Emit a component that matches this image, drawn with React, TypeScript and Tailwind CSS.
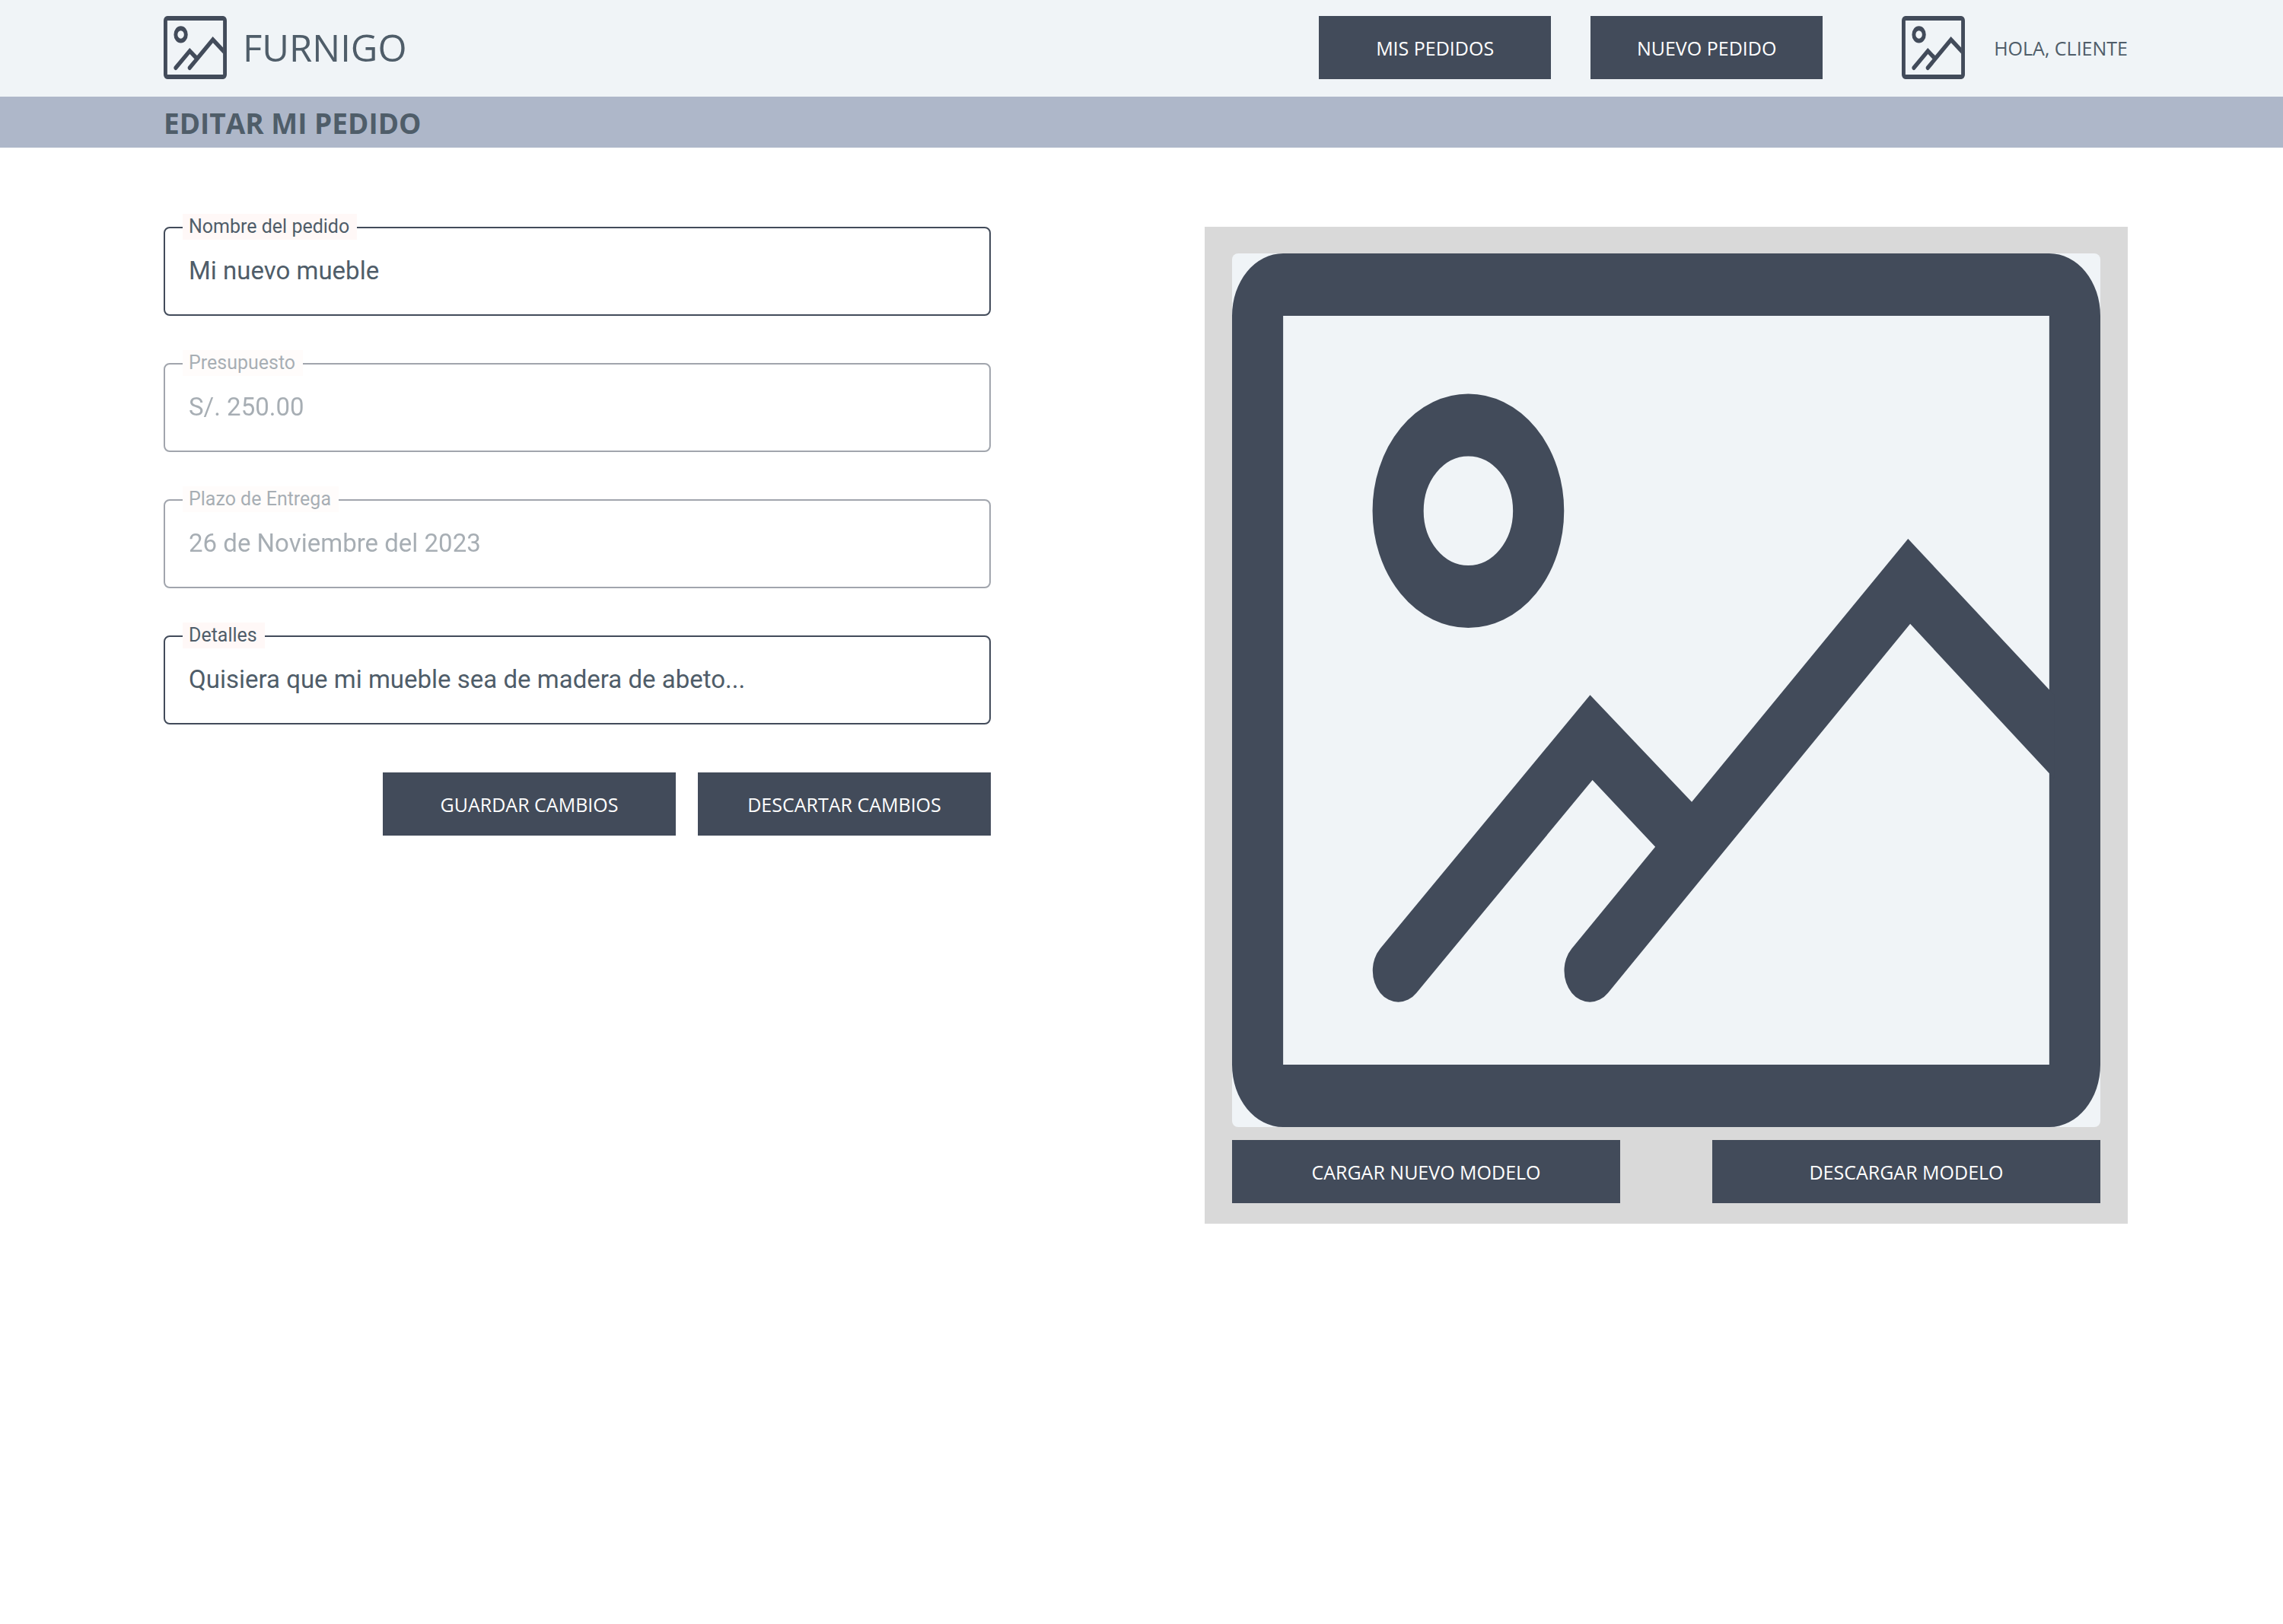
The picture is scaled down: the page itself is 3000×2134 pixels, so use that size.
import type { ReactNode } from 'react';

function PictureIcon({ className, title }: { className: string; title: string }) {
  return (
    <svg viewBox="0 0 17 14" preserveAspectRatio="none" className={className} role="img" aria-label={title} fill="currentColor">
      <path fillRule="evenodd" d="M1 0H16A1 1 0 0 1 17 1V13A1 1 0 0 1 16 14H1A1 1 0 0 1 0 13V1A1 1 0 0 1 1 0ZM1 1V13H16V1Z" />
      <circle cx="4.625" cy="4.125" r="1.375" fill="none" stroke="currentColor" strokeWidth="1" />
      <path d="M7.01 7.076L9 8.79L13.235 4.573L16.1 7.08V8.42L13.277 5.937L7.36 11.85A.5 .5 0 0 1 6.65 11.14L8.286 9.51L7.056 8.44L3.61 11.85A.5 .5 0 0 1 2.9 11.14Z" />
    </svg>
  );
}

function Button({ children, className }: { children: ReactNode; className: string }) {
  return (
    <button type="button" className={`h-[83px] bg-[#424b5a] text-center text-[25px] leading-8 whitespace-nowrap text-white ${className}`}>
      {children}
    </button>
  );
}

function Field({ id, label, value, disabled = false }: { id: string; label: string; value: string; disabled?: boolean }) {
  return (
    <div className={`relative font-[Roboto,sans-serif] text-[#4f5d69] ${disabled ? 'opacity-50' : ''}`}>
      <input
        id={id}
        type="text"
        defaultValue={value}
        disabled={disabled}
        className="block h-[117px] w-full rounded-lg border-2 border-[#424b5a] bg-transparent px-[31px] pb-[3px] text-[33px] leading-10"
      />
      <label htmlFor={id} className="absolute -top-[17px] left-[25px] h-[34px] bg-[#fff8f7] pr-[10px] pl-2 text-[25px] leading-[34px]">
        {label}
      </label>
    </div>
  );
}

export default function App() {
  return (
    <div className="min-h-screen bg-white font-['Open_Sans',sans-serif] text-[#4f5d69]">
      <header className="flex items-center justify-between bg-[#f0f4f7] pt-[21px] pr-[204px] pb-[23px] pl-[215px]">
        <a href="#" className="flex items-center gap-[21px]">
          <PictureIcon title="Logo" className="size-[83px] text-[#424b5a]" />
          <span className="text-[49px] leading-none">FURNIGO</span>
        </a>
        <div className="flex items-center gap-[104px]">
          <nav className="flex gap-[52px]">
            <Button className="w-[305px]">MIS PEDIDOS</Button>
            <Button className="w-[305px]">NUEVO PEDIDO</Button>
          </nav>
          <div className="flex items-center gap-[38px]">
            <PictureIcon title="Avatar" className="size-[83px] text-[#424b5a]" />
            <span className="text-[25px] leading-8">HOLA, CLIENTE</span>
          </div>
        </div>
      </header>

      <div className="flex h-[67px] items-center bg-[#aeb7c9] pt-[2px] pl-[215px]">
        <h1 className="text-[37px] leading-none font-bold">EDITAR MI PEDIDO</h1>
      </div>

      <main className="grid grid-cols-[1087fr_1213fr] items-start gap-[281px] pt-[104px] pr-[204px] pl-[215px]">
        <form className="flex flex-col gap-[62px]">
          <Field id="nombre" label="Nombre del pedido" value="Mi nuevo mueble" />
          <Field id="presupuesto" label="Presupuesto" value="S/. 250.00" disabled />
          <Field id="plazo" label="Plazo de Entrega" value="26 de Noviembre del 2023" disabled />
          <Field id="detalles" label="Detalles" value="Quisiera que mi mueble sea de madera de abeto..." />
          <div className="flex justify-end gap-[29px] pt-px">
            <Button className="w-[385px]">GUARDAR CAMBIOS</Button>
            <Button className="w-[385px]">DESCARTAR CAMBIOS</Button>
          </div>
        </form>

        <section className="bg-[#d9d9d9] px-9 pt-[35px] pb-[27px]">
          <div className="rounded-lg bg-[#f0f4f7]">
            <PictureIcon title="Modelo" className="block aspect-[1141/1148] w-full text-[#424b5a]" />
          </div>
          <div className="mt-[17px] flex justify-between">
            <Button className="w-[510px]">CARGAR NUEVO MODELO</Button>
            <Button className="w-[510px]">DESCARGAR MODELO</Button>
          </div>
        </section>
      </main>
    </div>
  );
}
